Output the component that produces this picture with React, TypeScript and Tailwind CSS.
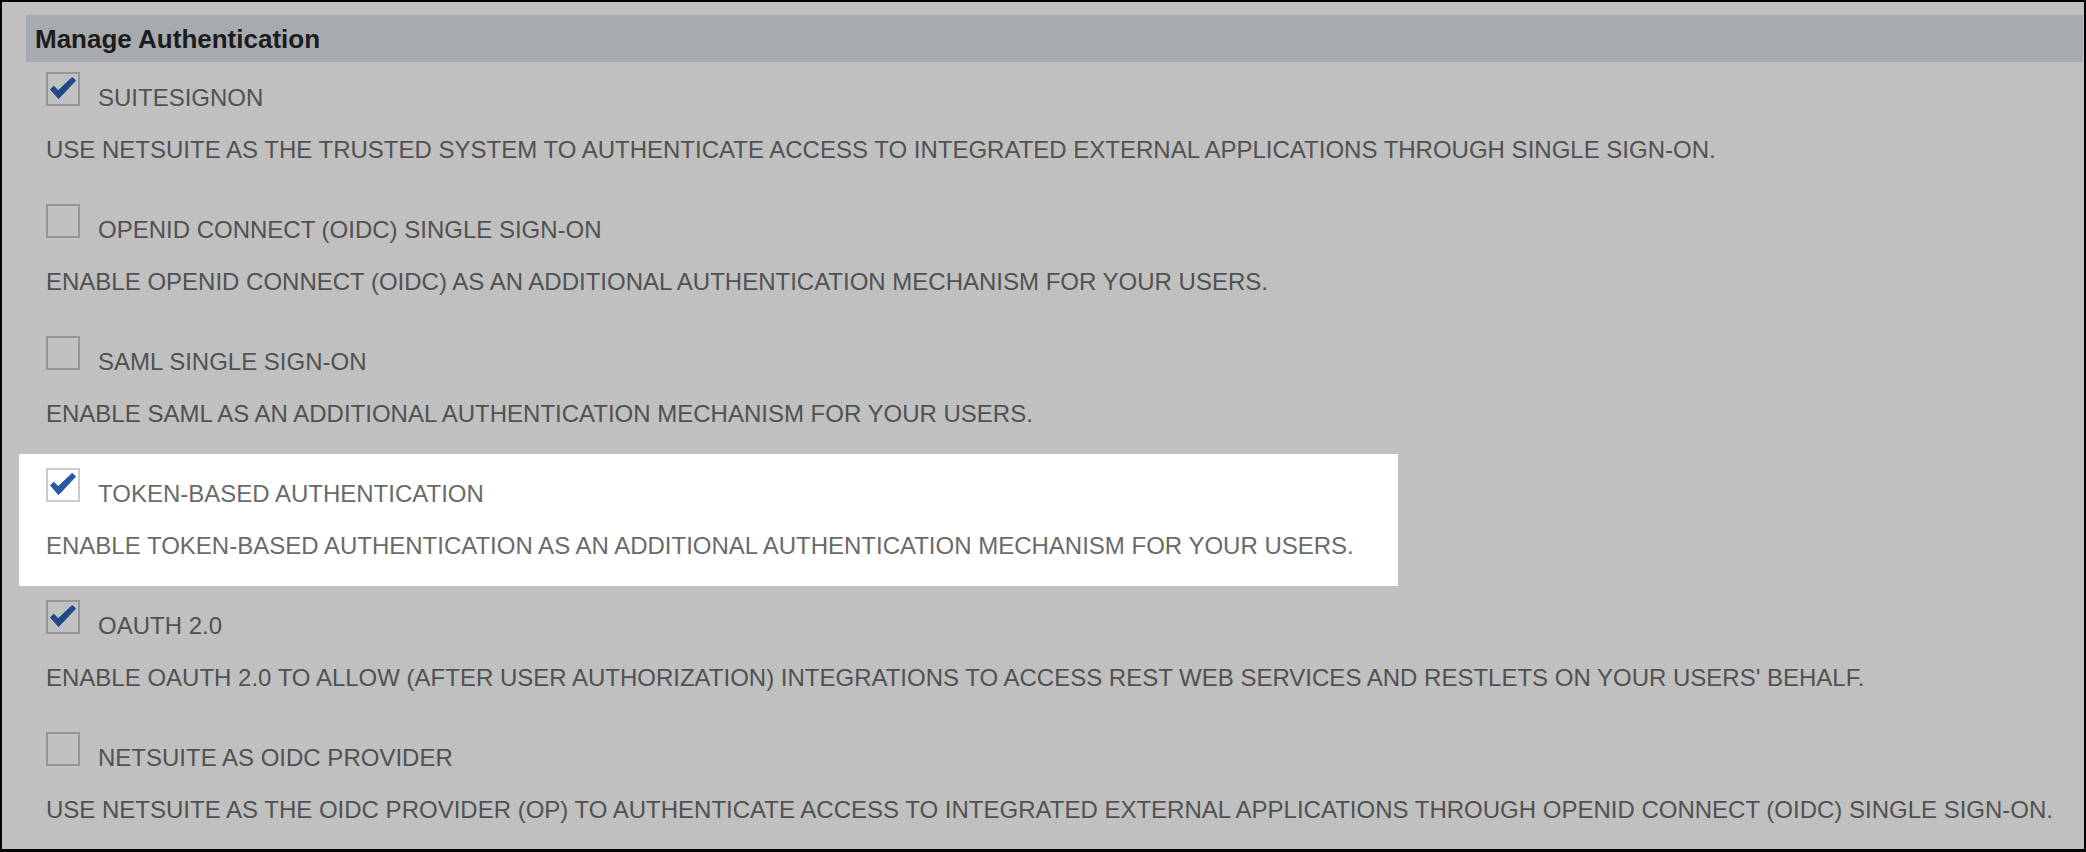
import React from 'react';

interface AuthOption {
  label: string;
  description: string;
  checked: boolean;
  highlighted?: boolean;
}

const options: AuthOption[] = [
  {
    label: 'SUITESIGNON',
    description:
      'USE NETSUITE AS THE TRUSTED SYSTEM TO AUTHENTICATE ACCESS TO INTEGRATED EXTERNAL APPLICATIONS THROUGH SINGLE SIGN-ON.',
    checked: true,
  },
  {
    label: 'OPENID CONNECT (OIDC) SINGLE SIGN-ON',
    description: 'ENABLE OPENID CONNECT (OIDC) AS AN ADDITIONAL AUTHENTICATION MECHANISM FOR YOUR USERS.',
    checked: false,
  },
  {
    label: 'SAML SINGLE SIGN-ON',
    description: 'ENABLE SAML AS AN ADDITIONAL AUTHENTICATION MECHANISM FOR YOUR USERS.',
    checked: false,
  },
  {
    label: 'TOKEN-BASED AUTHENTICATION',
    description:
      'ENABLE TOKEN-BASED AUTHENTICATION AS AN ADDITIONAL AUTHENTICATION MECHANISM FOR YOUR USERS.',
    checked: true,
    highlighted: true,
  },
  {
    label: 'OAUTH 2.0',
    description:
      "ENABLE OAUTH 2.0 TO ALLOW (AFTER USER AUTHORIZATION) INTEGRATIONS TO ACCESS REST WEB SERVICES AND RESTLETS ON YOUR USERS' BEHALF.",
    checked: true,
  },
  {
    label: 'NETSUITE AS OIDC PROVIDER',
    description:
      'USE NETSUITE AS THE OIDC PROVIDER (OP) TO AUTHENTICATE ACCESS TO INTEGRATED EXTERNAL APPLICATIONS THROUGH OPENID CONNECT (OIDC) SINGLE SIGN-ON.',
    checked: false,
  },
];

function Checkbox({ checked, light }: { checked: boolean; light?: boolean }) {
  return (
    <div
      className={
        light
          ? 'w-[34px] h-[34px] shrink-0 border-2 border-[#cbcbcb] bg-white'
          : 'w-[34px] h-[34px] shrink-0 border-2 border-[#959595] bg-[#c1c1c1]'
      }
    >
      {checked && (
        <svg width="30" height="30" viewBox="0 0 30 30">
          <path
            d="M2.5 15.5 L5.8 12.3 L10.2 16.6 L24.2 3.4 L27.6 6.6 L10.6 24.6 Z"
            fill={light ? '#2757a6' : '#1f4a86'}
            stroke={light ? '#2757a6' : '#1f4a86'}
            strokeWidth="1"
            strokeLinejoin="round"
          />
        </svg>
      )}
    </div>
  );
}

export default function App() {
  return (
    <div className="w-[2086px] h-[852px] overflow-hidden border-2 border-b-[3px] border-black bg-[#c0c0c0] font-['Liberation_Sans',Arial,sans-serif]">
      {/* Section header */}
      <div className="mt-[13px] ml-[24px] mr-[1px] h-[47px] flex items-center pl-[9px] bg-[#a7aaae]">
        <span className="text-[26px] leading-[26px] font-bold text-[#1c1c1c]">Manage Authentication</span>
      </div>

      {/* Options */}
      <div className="flex flex-col">
        {options.map((opt, i) => (
          <div
            key={opt.label}
            className={[
              'ml-[17px] w-[1379px] pl-[27px] pb-[28px]',
              i === 0 ? 'pt-[10px]' : 'pt-[14px]',
              opt.highlighted ? 'bg-white' : '',
            ].join(' ')}
          >
            <div className="flex items-start h-[34px]">
              <Checkbox checked={opt.checked} light={opt.highlighted} />
              <span
                className={
                  opt.highlighted
                    ? 'ml-[18px] mt-[14px] text-[24px] leading-[24px] whitespace-nowrap text-[#6a6a6a]'
                    : 'ml-[18px] mt-[14px] text-[24px] leading-[24px] whitespace-nowrap text-[#515151]'
                }
              >
                {opt.label}
              </span>
            </div>
            <div
              className={
                opt.highlighted
                  ? 'mt-[32px] text-[24px] leading-[24px] whitespace-nowrap text-[#6a6a6a]'
                  : 'mt-[32px] text-[24px] leading-[24px] whitespace-nowrap text-[#515151]'
              }
            >
              {opt.description}
            </div>
          </div>
        ))}
      </div>
    </div>
  );
}
